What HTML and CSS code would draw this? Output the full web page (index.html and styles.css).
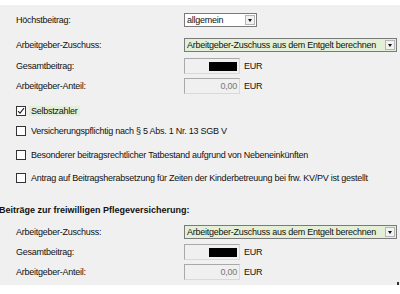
FILE: index.html
```html
<!DOCTYPE html>
<html lang="de">
<head>
<meta charset="utf-8">
<link rel="stylesheet" href="styles.css">
</head>
<body>
<div class="panel">
  <div class="row r1">
    <span class="label">Höchstbeitrag:</span>
    <div class="combo small"><span class="ctext">allgemein</span><span class="arrow"></span></div>
  </div>
  <div class="row r2">
    <span class="label">Arbeitgeber-Zuschuss:</span>
    <div class="combo wide green"><span class="ctext">Arbeitgeber-Zuschuss aus dem Entgelt berechnen</span><span class="arrow"></span></div>
  </div>
  <div class="row r3">
    <span class="label">Gesamtbeitrag:</span>
    <div class="field"><span class="mask"></span></div>
    <span class="unit">EUR</span>
  </div>
  <div class="row r4">
    <span class="label">Arbeitgeber-Anteil:</span>
    <div class="field"><span class="val">0,00</span></div>
    <span class="unit">EUR</span>
  </div>

  <div class="row check c1">
    <span class="box"><svg width="8" height="8" viewBox="0 0 8 8"><path d="M1 4.2 L3 6.2 L7 1.2" fill="none" stroke="#222" stroke-width="1.1"/></svg></span>
    <span class="ctl hl">Selbstzahler</span>
  </div>
  <div class="row check c2">
    <span class="box"></span>
    <span class="ctl">Versicherungspflichtig nach § 5 Abs. 1 Nr. 13 SGB V</span>
  </div>
  <div class="row check c3">
    <span class="box"></span>
    <span class="ctl">Besonderer beitragsrechtlicher Tatbestand aufgrund von Nebeneinkünften</span>
  </div>
  <div class="row check c4">
    <span class="box"></span>
    <span class="ctl">Antrag auf Beitragsherabsetzung für Zeiten der Kinderbetreuung bei frw. KV/PV ist gestellt</span>
  </div>

  <div class="row heading">Beiträge zur freiwilligen Pflegeversicherung:</div>

  <div class="row r5">
    <span class="label">Arbeitgeber-Zuschuss:</span>
    <div class="combo wide green"><span class="ctext">Arbeitgeber-Zuschuss aus dem Entgelt berechnen</span><span class="arrow"></span></div>
  </div>
  <div class="row r6">
    <span class="label">Gesamtbeitrag:</span>
    <div class="field"><span class="mask"></span></div>
    <span class="unit">EUR</span>
  </div>
  <div class="row r7">
    <span class="label">Arbeitgeber-Anteil:</span>
    <div class="field"><span class="val">0,00</span></div>
    <span class="unit">EUR</span>
  </div>
  <span class="dot"></span>
</div>
</body>
</html>
```
FILE: styles.css
```css
html, body {
  margin: 0;
  padding: 0;
  background: #ffffff;
}
body {
  font-family: "Liberation Sans", Arial, sans-serif;
  font-size: 9px;
  letter-spacing: -0.25px;
  color: #111;
}
.panel {
  position: relative;
  margin-top: 5px;
  height: 280px;
  box-sizing: border-box;
  background: #f0f0f0;
  padding-left: 16px;
  display: flex;
  flex-direction: column;
  overflow: hidden;
}
.row {
  display: flex;
  align-items: center;
  flex: none;
  height: 14px;
}
.r1 { margin-top: 8px; }
.r2 { margin-top: 11px; }
.r3 { margin-top: 6px; height: 16px; }
.r4 { margin-top: 4px; height: 16px; }
.c1 { margin-top: 10px; }
.c2 { margin-top: 6px; }
.c3 { margin-top: 10px; }
.c4 { margin-top: 9px; }
.heading {
  margin-top: 18px;
  margin-left: -17px;
  font-weight: bold;
  letter-spacing: 0;
}
.r5 { margin-top: 8px; }
.r6 { margin-top: 5px; height: 16px; }
.r7 { margin-top: 4px; height: 16px; }

.label {
  width: 168px;
  flex: none;
}
.combo {
  box-sizing: border-box;
  height: 14px;
  border: 1px solid #7a7a7a;
  background: #ffffff;
  display: flex;
  align-items: center;
  justify-content: space-between;
  padding: 0 1px 0 2px;
}
.combo.small { width: 73px; }
.combo.wide { width: 213px; }
.combo.green { background: #e3efd6; }
.ctext { white-space: nowrap; }
.arrow {
  box-sizing: border-box;
  width: 10px;
  height: 10px;
  background: #f2f2f2;
  border: 1px solid #b5b5b5;
  position: relative;
  flex: none;
}
.arrow::after {
  content: "";
  position: absolute;
  left: 2px;
  top: 3px;
  border-left: 2.5px solid transparent;
  border-right: 2.5px solid transparent;
  border-top: 3px solid #111;
}
.field {
  box-sizing: border-box;
  width: 56px;
  height: 16px;
  border: 1px solid #a9a9a9;
  border-right-color: #d9d9d9;
  border-bottom-color: #d9d9d9;
  background: #f0f0f0;
  display: flex;
  align-items: center;
  justify-content: flex-end;
  padding-right: 2px;
}
.mask {
  width: 28px;
  height: 9px;
  background: #000;
}
.val { color: #777; }
.unit { margin-left: 4px; }
.check { gap: 3px; }
.box {
  box-sizing: border-box;
  width: 10px;
  height: 10px;
  border: 1px solid #333;
  background: #fff;
  display: flex;
  align-items: center;
  justify-content: center;
  flex: none;
}
.ctl {
  white-space: nowrap;
  padding: 0 2px;
  line-height: 10px;
}
.hl { background: #e3efd6; }
.dot {
  position: absolute;
  right: 1px;
  bottom: 0px;
  width: 2px;
  height: 3px;
  background: #333;
}
```
